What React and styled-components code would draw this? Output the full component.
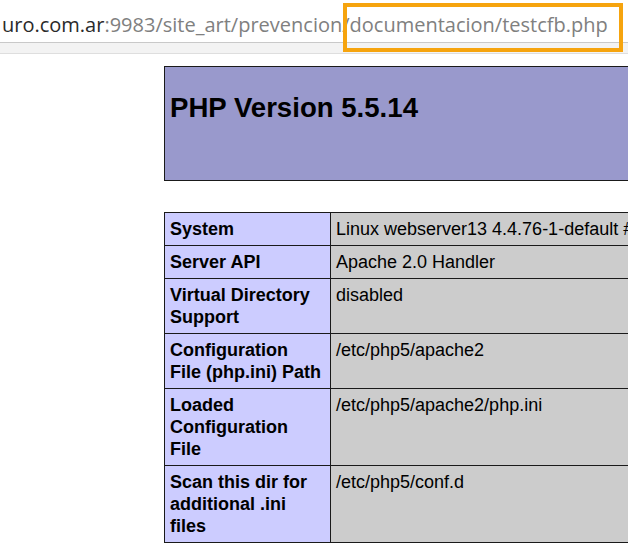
import React from "react";
import styled, { createGlobalStyle } from "styled-components";

const Global = createGlobalStyle`
  html, body {
    margin: 0;
    padding: 0;
    background: #fff;
    overflow: hidden;
  }
`;

const Window = styled.div`
  width: 628px;
  height: 543px;
  overflow: hidden;
  display: flex;
  flex-direction: column;
`;

const AddressBar = styled.div`
  flex-shrink: 0;
  height: 43px;
  box-sizing: border-box;
  padding: 11px 0 0 2px;
  border-bottom: 1px solid #c9c9c9;
  font-family: "Open Sans", "Noto Sans", sans-serif;
  font-size: 20px;
  color: #808080;
  white-space: nowrap;
  position: relative;
`;

const Host = styled.span`
  color: #2a2a2a;
`;

const Highlight = styled.span`
  position: relative;
  &::after {
    content: "";
    position: absolute;
    left: -7px;
    right: -15px;
    top: -8px;
    bottom: -14px;
    border: 4px solid #f6a40e;
  }
`;

const TabStrip = styled.div`
  flex-shrink: 0;
  height: 10px;
  background: #f3f3f3;
  border-bottom: 1px solid #dedede;
`;

const Page = styled.div`
  flex-shrink: 0;
  padding: 12px 0 0 164px;
  font-family: "Liberation Sans", Arial, sans-serif;
  color: #000;
`;

const Header = styled.div`
  width: 750px;
  height: 115px;
  box-sizing: border-box;
  border: 1px solid #1a1a1a;
  background: #9999cc;
  padding: 25px 5px 0;
`;

const Title = styled.h1`
  margin: 0;
  font-size: 27.6px;
  font-weight: bold;
  line-height: normal;
`;

const Table = styled.table`
  margin-top: 31px;
  width: 750px;
  table-layout: fixed;
  border-collapse: collapse;
  font-size: 18px;
  line-height: 22px;
`;

const Col = styled.col`
  width: ${(p) => p.$w}px;
`;

const Label = styled.td`
  padding: 5px 7px 5px 5px;
  border: 1px solid #1a1a1a;
  background: #ccccff;
  font-weight: bold;
  vertical-align: top;
`;

const Value = styled.td`
  padding: 5px 5px;
  border: 1px solid #1a1a1a;
  background: #cccccc;
  vertical-align: top;
  white-space: nowrap;
  overflow: hidden;
`;

const rows = [
  ["System", "Linux webserver13 4.4.76-1-default #1 SMP Fri Jul 14 08:48:13 UTC 2017"],
  ["Server API", "Apache 2.0 Handler"],
  ["Virtual Directory Support", "disabled"],
  ["Configuration File (php.ini) Path", "/etc/php5/apache2"],
  ["Loaded Configuration File", "/etc/php5/apache2/php.ini"],
  ["Scan this dir for additional .ini files", "/etc/php5/conf.d"],
];

export default function App() {
  return (
    <Window>
      <Global />
      <AddressBar>
        <Host>uro.com.ar</Host>:9983/site_art/prevencion/
        <Highlight>documentacion/testcfb.php</Highlight>
      </AddressBar>
      <TabStrip />
      <Page>
        <Header>
          <Title>PHP Version 5.5.14</Title>
        </Header>
        <Table>
          <colgroup>
            <Col $w={166} />
            <Col $w={584} />
          </colgroup>
          <tbody>
            {rows.map(([k, v]) => (
              <tr key={k}>
                <Label>{k}</Label>
                <Value>{v}</Value>
              </tr>
            ))}
          </tbody>
        </Table>
      </Page>
    </Window>
  );
}
